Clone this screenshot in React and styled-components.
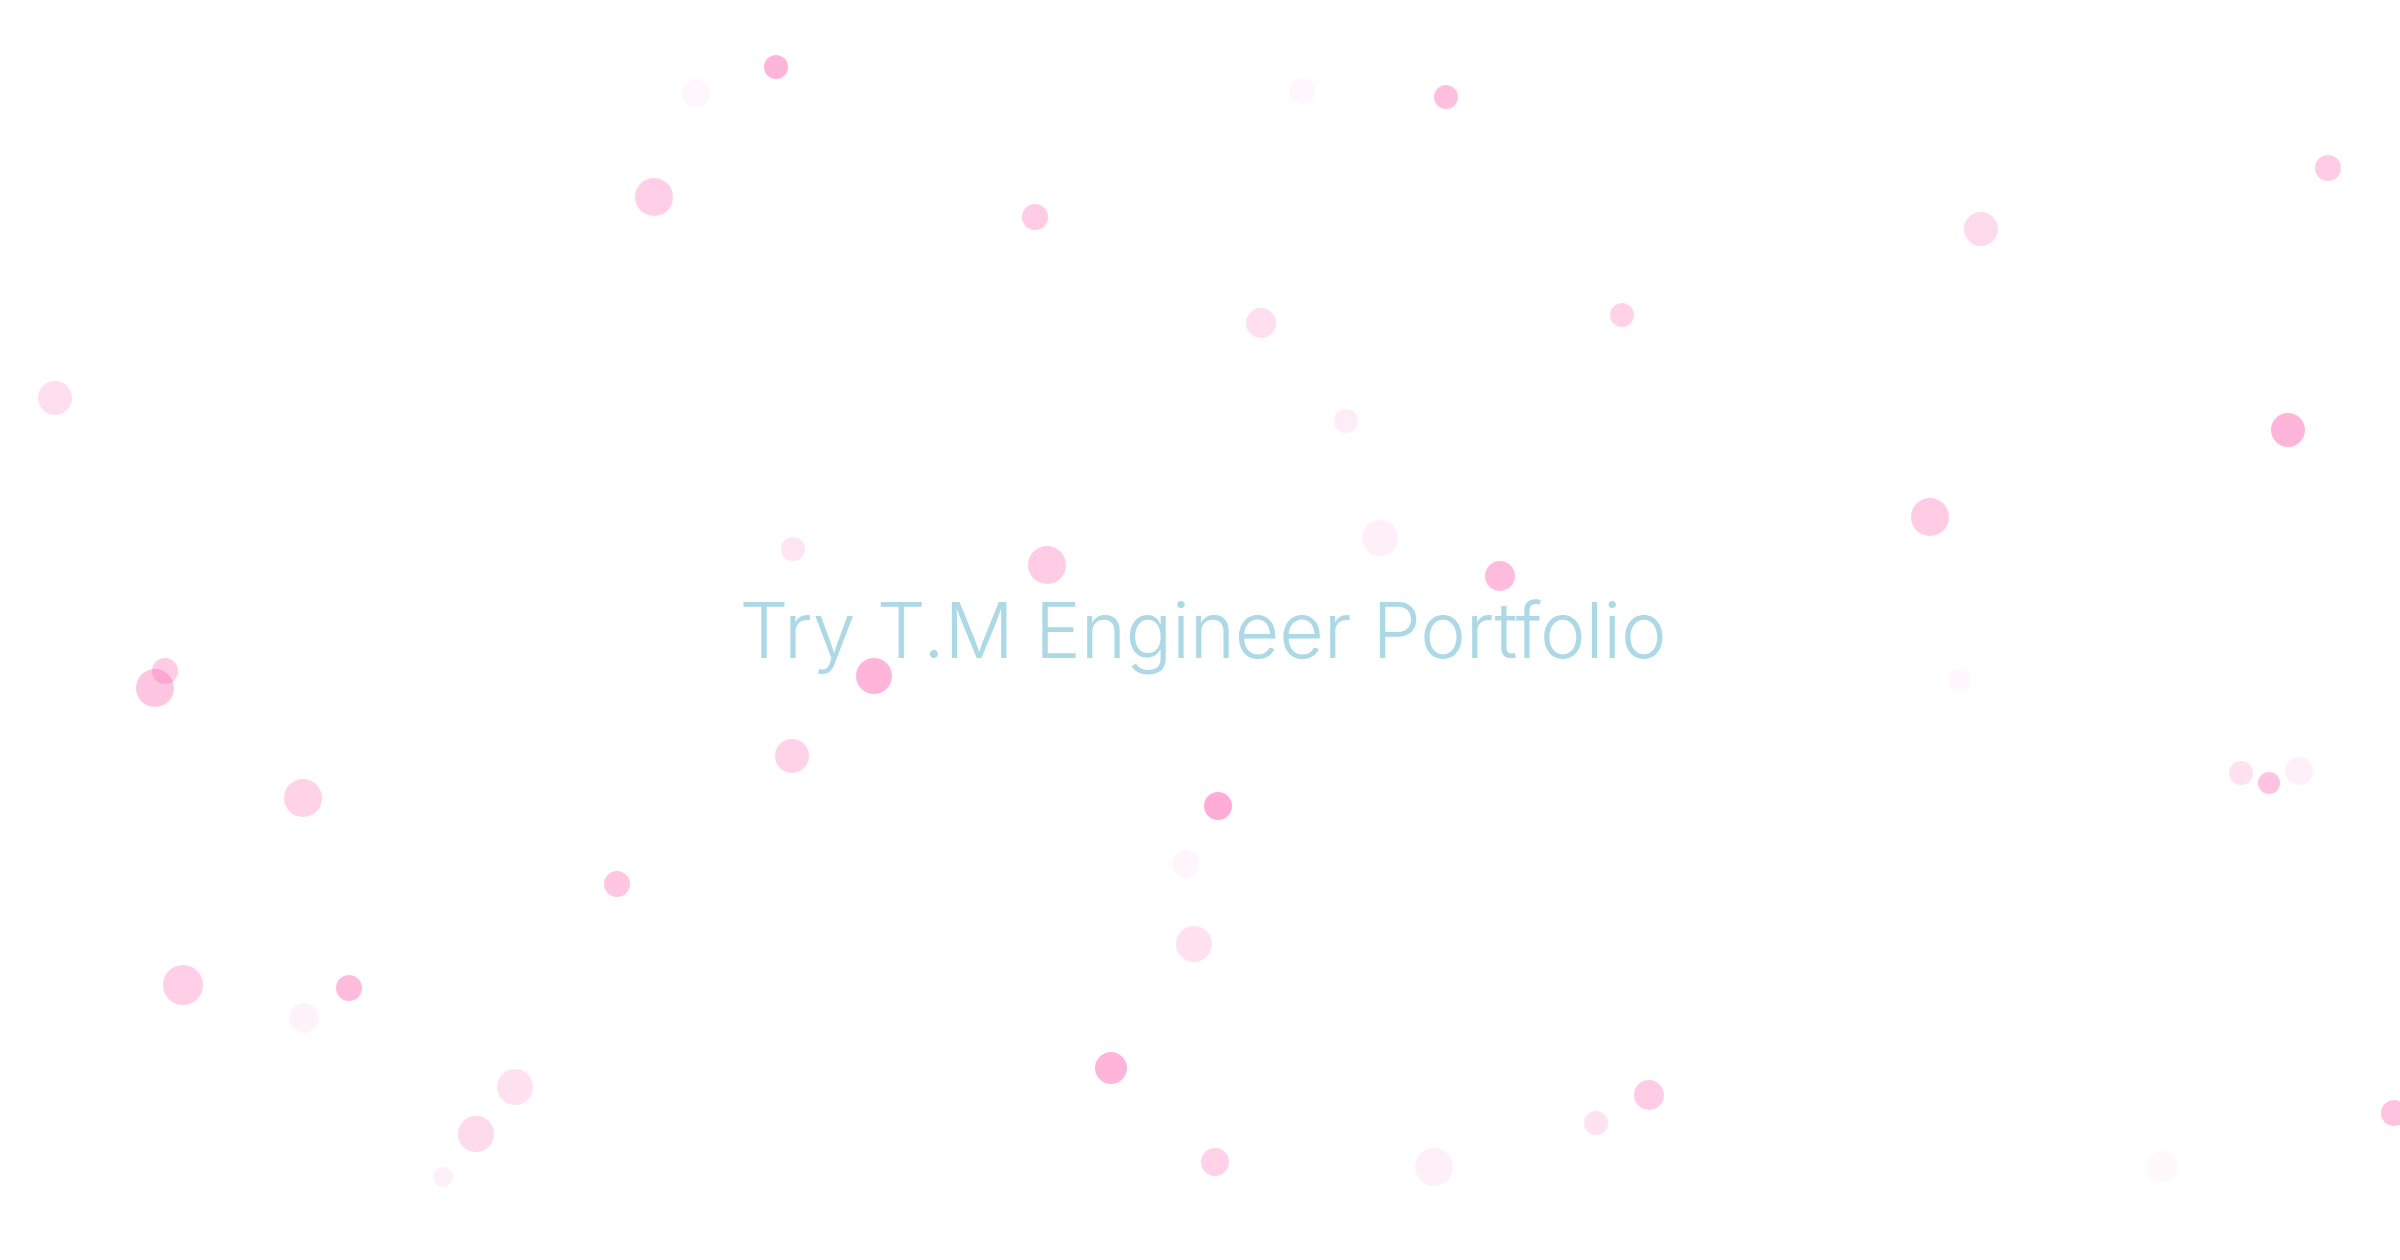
import React from 'react'
import styled, { createGlobalStyle } from 'styled-components'

// particle snapshot: x, y (center), radius, alpha of hotpink
const particles = [
  [776, 67, 12, 0.5], [696, 93, 14, 0.05], [654, 197, 19, 0.32], [1035, 217, 13, 0.35],
  [1302, 91, 13, 0.05], [1446, 97, 12, 0.42], [2328, 168, 13, 0.35], [1981, 229, 17, 0.25],
  [1261, 323, 15, 0.22], [1622, 315, 12, 0.3], [55, 398, 17, 0.22], [1346, 421, 12, 0.12],
  [2288, 430, 17, 0.5], [1930, 517, 19, 0.35], [793, 549, 12, 0.18], [1047, 565, 19, 0.35],
  [1380, 538, 18, 0.1], [1500, 576, 15, 0.45], [165, 671, 13, 0.35], [155, 688, 19, 0.38],
  [874, 676, 18, 0.5], [1959, 680, 11, 0.05], [792, 756, 17, 0.3], [303, 798, 19, 0.3],
  [2241, 773, 12, 0.2], [2269, 783, 11, 0.4], [2299, 771, 14, 0.1], [1218, 806, 14, 0.55],
  [1186, 864, 14, 0.06], [617, 884, 13, 0.38], [1194, 944, 18, 0.2], [183, 985, 20, 0.32],
  [349, 988, 13, 0.45], [304, 1018, 15, 0.08], [515, 1087, 18, 0.2], [476, 1134, 18, 0.25],
  [443, 1177, 10, 0.1], [1111, 1068, 16, 0.5], [1649, 1095, 15, 0.35], [1596, 1123, 12, 0.2],
  [1215, 1162, 14, 0.3], [1434, 1167, 19, 0.1], [2162, 1167, 16, 0.04], [2394, 1113, 13, 0.4],
]

const GlobalStyle = createGlobalStyle`
  html, body {
    margin: 0;
    padding: 0;
    background: #ffffff;
  }
  body {
    font-family: 'Inter', 'Lato', sans-serif;
    overflow: hidden;
  }
`

const App = () => {
  return (
    <Wrapper>
      <GlobalStyle />
      <ParticleField>
        {particles.map(([x, y, r, a], i) => (
          <Dot
            key={i}
            style={{
              left: x - r,
              top: y - r,
              width: r * 2,
              height: r * 2,
              opacity: a,
            }}
          />
        ))}
      </ParticleField>
      <Title>Try T.M Engineer Portfolio</Title>
    </Wrapper>
  )
}

const Wrapper = styled.div`
  position: relative;
  width: 100vw;
  height: 100vh;
  display: flex;
  align-items: center;
  justify-content: center;
  overflow: hidden;
`

const ParticleField = styled.div`
  position: absolute;
  inset: 0;
  pointer-events: none;
`

const Dot = styled.span`
  position: absolute;
  border-radius: 50%;
  background: hotpink;
`

const Title = styled.h1`
  position: relative;
  margin: 0 0 0 6px;
  font-family: 'Inter', 'Lato', sans-serif;
  font-weight: 300;
  font-size: 77px;
  letter-spacing: -0.2px;
  color: lightblue;
  line-height: 1;
`

export default App
